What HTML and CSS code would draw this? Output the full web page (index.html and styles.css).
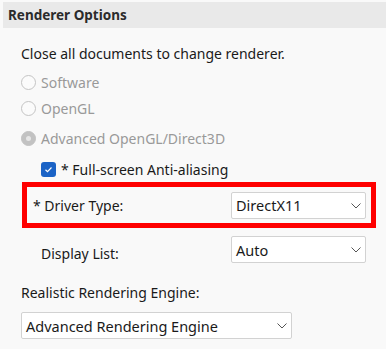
FILE: index.html
```html
<!DOCTYPE html>
<html>
<head>
  <meta charset="utf-8"/>
  <link rel="stylesheet" href="styles.css">
</head>
<body>
  <div class="header">Renderer Options</div>

  <div class="content">
    <div class="row note">Close all documents to change renderer.</div>

    <div class="row radio-row disabled">
      <span class="radio"></span>Software
    </div>
    <div class="row radio-row disabled">
      <span class="radio"></span>OpenGL
    </div>
    <div class="row radio-row disabled adv">
      <span class="radio checked"></span>Advanced OpenGL/Direct3D
    </div>

    <div class="row check-row">
      <span class="checkbox">
        <svg width="15" height="15" viewBox="0 0 15 15">
          <path d="M4.5 7.7 L6.5 9.6 L10.5 5.5" fill="none" stroke="#fff" stroke-width="1.2"/>
        </svg>
      </span>* Full-screen Anti-aliasing
    </div>

    <div class="highlight">
      <div class="field-row">
        <span class="label">* Driver Type:</span>
        <div class="select">DirectX11<svg class="chev" width="10" height="6" viewBox="0 0 10 6"><path d="M0.5 0.5 L5 5 L9.5 0.5" fill="none" stroke="#555" stroke-width="1"/></svg></div>
      </div>
    </div>

    <div class="field-row display">
      <span class="label">Display List:</span>
      <div class="select">Auto<svg class="chev" width="10" height="6" viewBox="0 0 10 6"><path d="M0.5 0.5 L5 5 L9.5 0.5" fill="none" stroke="#555" stroke-width="1"/></svg></div>
    </div>

    <div class="row engine-label">Realistic Rendering Engine:</div>
    <div class="select wide">Advanced Rendering Engine<svg class="chev" width="10" height="6" viewBox="0 0 10 6"><path d="M0.5 0.5 L5 5 L9.5 0.5" fill="none" stroke="#555" stroke-width="1"/></svg></div>
  </div>
</body>
</html>
```

FILE: styles.css
```css
body {
  margin: 0;
  background: #f9f9f9;
  font-family: "Noto Sans", "Open Sans", sans-serif;
  font-size: 14px;
  color: #1a1a1a;
}
.header {
  margin: 2px 0 0 3px;
  height: 26px;
  padding-left: 5px;
  background: #e9e9e9;
  font-weight: bold;
  font-size: 13.5px;
  display: flex;
  align-items: center;
  color: #2b2b2b;
}
.content {
  padding-left: 21px;
}
.row {
  display: flex;
  align-items: center;
  height: 26px;
}
.note {
  margin-top: 12px;
}
.radio-row {
  margin-top: 3px;
  margin-bottom: -3px;
}
.disabled {
  color: #999;
}
.radio {
  width: 13px;
  height: 13px;
  border: 1px solid #c4c4c4;
  border-radius: 50%;
  background: #fbfbfb;
  margin-right: 5px;
  box-sizing: content-box;
}
.radio.checked {
  background: #c2c2c2;
  border-color: #c2c2c2;
  position: relative;
}
.radio.checked::after {
  content: "";
  position: absolute;
  left: 4px;
  top: 4px;
  width: 5px;
  height: 5px;
  border-radius: 50%;
  background: #e6e6e6;
}
.adv {
  margin-top: 7px;
}
.check-row {
  margin-top: 8px;
  padding-left: 20px;
}
.checkbox {
  width: 15px;
  height: 15px;
  border-radius: 3px;
  background: #1b63c6;
  margin-right: 5px;
  display: flex;
}
.highlight {
  margin-top: 0;
  margin-left: 1px;
  width: 344px;
  height: 36px;
  border: 5px solid #f00;
  display: flex;
  align-items: center;
}
.field-row {
  display: flex;
  align-items: center;
  width: 100%;
}
.highlight .label {
  padding-left: 6px;
  width: 198px;
}
.select {
  position: relative;
  border: 1px solid #d2d2d2;
  border-radius: 2px;
  background: #fff;
  display: flex;
  align-items: center;
  padding-left: 4px;
  box-sizing: border-box;
  width: 135px;
  height: 27px;
  font-size: 14.5px;
}
.chev {
  position: absolute;
  right: 4px;
  top: 10px;
}
.display {
  margin-top: 8px;
  width: 345px;
}
.display .label {
  padding-left: 20px;
  width: 190px;
  padding-top: 7px;
}
.engine-label {
  margin-top: 16px;
}
.select.wide {
  width: 271px;
  margin-top: 7px;
}
```
